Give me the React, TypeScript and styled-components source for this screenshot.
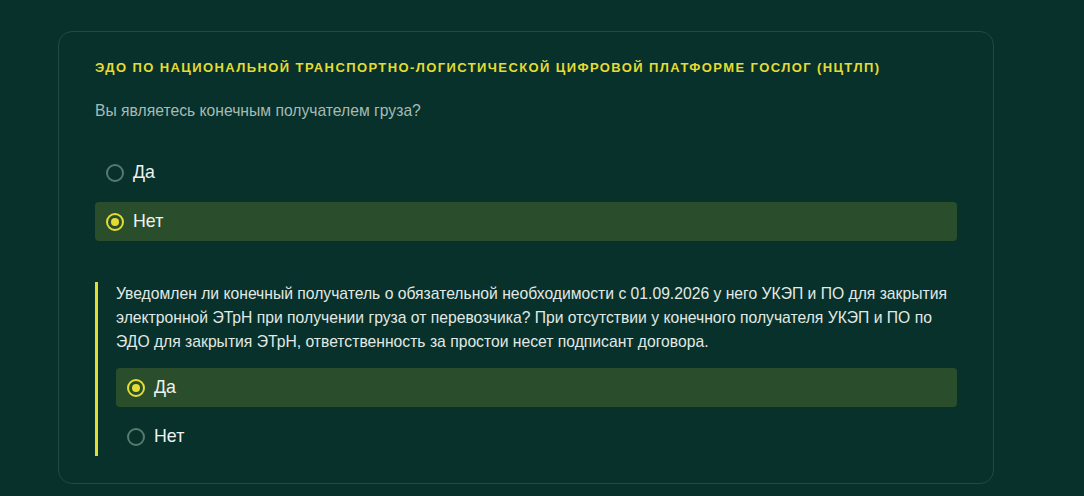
import React, { useState } from "react";
import styled, { createGlobalStyle } from "styled-components";

const Global = createGlobalStyle`
  html, body { margin: 0; padding: 0; background: #07312a; }
  body { font-family: "Liberation Sans", Arial, sans-serif; }
  * { box-sizing: border-box; }
`;

const Page = styled.div`
  width: 1084px;
  height: 496px;
  background: #07312a;
  padding: 31px 90px 0 58px;
`;

const Card = styled.section`
  width: 936px;
  border: 1px solid #1f4b41;
  border-radius: 14px;
  padding: 29px 36px 27px 36px;
  display: flex;
  flex-direction: column;
`;

const Title = styled.h2`
  margin: 0;
  font-size: 13px;
  line-height: 14px;
  font-weight: 700;
  letter-spacing: 1.4px;
  text-transform: uppercase;
  color: #e4dc33;
  white-space: nowrap;
`;

const Question = styled.p`
  margin: 26px 0 0;
  font-size: 15.7px;
  line-height: 20px;
  color: #a6bbb4;
`;

const Options = styled.div<{ $top: number }>`
  display: flex;
  flex-direction: column;
  gap: 10px;
  margin-top: ${(p) => p.$top}px;
`;

const OptionRow = styled.label<{ $checked: boolean }>`
  display: flex;
  align-items: center;
  gap: 9px;
  height: 39px;
  padding: 0 11px;
  border-radius: 4px;
  cursor: pointer;
  background: ${(p) => (p.$checked ? "#2a4e2c" : "transparent")};
  color: #eef2ef;
  font-size: 17.8px;
`;

const Radio = styled.span<{ $checked: boolean }>`
  width: 18px;
  height: 18px;
  border-radius: 50%;
  border: 2px solid ${(p) => (p.$checked ? "#e4dc33" : "#557a70")};
  display: flex;
  align-items: center;
  justify-content: center;
  flex-shrink: 0;
  &::after {
    content: "";
    width: 8px;
    height: 8px;
    border-radius: 50%;
    background: #e4dc33;
    display: ${(p) => (p.$checked ? "block" : "none")};
  }
`;

const SubBlock = styled.div`
  margin-top: 41px;
  border-left: 3px solid #e4dc33;
  padding-left: 18px;
`;

const SubText = styled.p`
  margin: 0;
  font-size: 15.7px;
  line-height: 24px;
  color: #e2e9e6;
`;

type OptProps = { label: string; checked: boolean; onSelect: () => void };

function Option({ label, checked, onSelect }: OptProps) {
  return (
    <OptionRow $checked={checked} onClick={onSelect}>
      <Radio $checked={checked} />
      <span>{label}</span>
    </OptionRow>
  );
}

export default function App() {
  const [a, setA] = useState("Нет");
  const [b, setB] = useState("Да");
  return (
    <Page>
      <Global />
      <Card>
        <Title>ЭДО по Национальной транспортно-логистической цифровой платформе ГОСЛОГ (НЦТЛП)</Title>
        <Question>Вы являетесь конечным получателем груза?</Question>
        <Options $top={32}>
          {["Да", "Нет"].map((o) => (
            <Option key={o} label={o} checked={a === o} onSelect={() => setA(o)} />
          ))}
        </Options>
        <SubBlock>
          <SubText>
            Уведомлен ли конечный получатель о обязательной необходимости с 01.09.2026 у него УКЭП и ПО для закрытия
            электронной ЭТрН при получении груза от перевозчика? При отсутствии у конечного получателя УКЭП и ПО по
            ЭДО для закрытия ЭТрН, ответственность за простои несет подписант договора.
          </SubText>
          <Options $top={14}>
            {["Да", "Нет"].map((o) => (
              <Option key={o} label={o} checked={b === o} onSelect={() => setB(o)} />
            ))}
          </Options>
        </SubBlock>
      </Card>
    </Page>
  );
}
